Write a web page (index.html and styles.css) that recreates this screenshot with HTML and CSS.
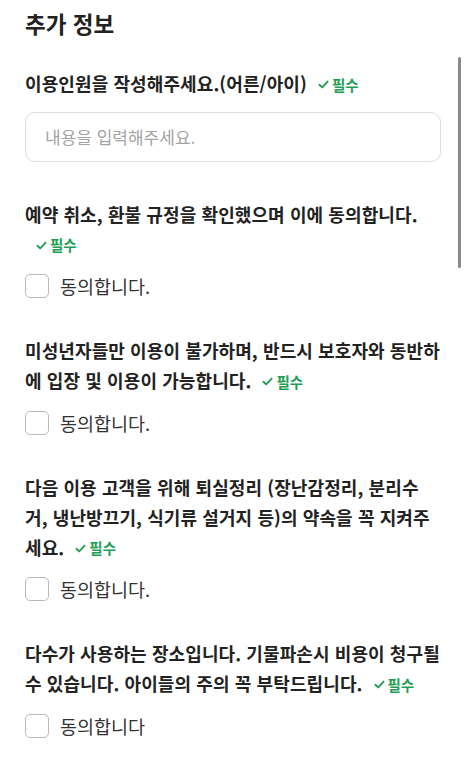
FILE: index.html
```html
<!DOCTYPE html>
<html lang="ko">
<head>
<meta charset="utf-8">
<link rel="stylesheet" href="styles.css">
</head>
<body>
<div class="page">
  <h1 class="title">추가 정보</h1>

  <section class="field first">
    <p class="q">이용인원을 작성해주세요.(어른/아이)<span class="req"><svg viewBox="0 0 12 12" class="chk"><path d="M1.5 6.3 L4.6 9.2 L10.5 2.8" fill="none" stroke="currentColor" stroke-width="2" stroke-linecap="round" stroke-linejoin="round"/></svg>필수</span></p>
    <div class="input">내용을 입력해주세요.</div>
  </section>

  <section class="field">
    <p class="q">예약 취소, 환불 규정을 확인했으며 이에 동의합니다.<span class="req"><svg viewBox="0 0 12 12" class="chk"><path d="M1.5 6.3 L4.6 9.2 L10.5 2.8" fill="none" stroke="currentColor" stroke-width="2" stroke-linecap="round" stroke-linejoin="round"/></svg>필수</span></p>
    <label class="agree"><span class="box"></span>동의합니다.</label>
  </section>

  <section class="field">
    <p class="q">미성년자들만 이용이 불가하며, 반드시 보호자와 동반하에 입장 및 이용이 가능합니다.<span class="req"><svg viewBox="0 0 12 12" class="chk"><path d="M1.5 6.3 L4.6 9.2 L10.5 2.8" fill="none" stroke="currentColor" stroke-width="2" stroke-linecap="round" stroke-linejoin="round"/></svg>필수</span></p>
    <label class="agree"><span class="box"></span>동의합니다.</label>
  </section>

  <section class="field">
    <p class="q">다음 이용 고객을 위해 퇴실정리 (장난감정리, 분리수거, 냉난방끄기, 식기류 설거지 등)의 약속을 꼭 지켜주세요.<span class="req"><svg viewBox="0 0 12 12" class="chk"><path d="M1.5 6.3 L4.6 9.2 L10.5 2.8" fill="none" stroke="currentColor" stroke-width="2" stroke-linecap="round" stroke-linejoin="round"/></svg>필수</span></p>
    <label class="agree"><span class="box"></span>동의합니다.</label>
  </section>

  <section class="field">
    <p class="q">다수가 사용하는 장소입니다. 기물파손시 비용이 청구될 수 있습니다. 아이들의 주의 꼭 부탁드립니다.<span class="req"><svg viewBox="0 0 12 12" class="chk"><path d="M1.5 6.3 L4.6 9.2 L10.5 2.8" fill="none" stroke="currentColor" stroke-width="2" stroke-linecap="round" stroke-linejoin="round"/></svg>필수</span></p>
    <label class="agree"><span class="box"></span>동의합니다</label>
  </section>
</div>
<div class="scrollbar"></div>
</body>
</html>
```
FILE: styles.css
```css
html, body {
  margin: 0;
  padding: 0;
  background: #fff;
}
body {
  font-family: "Noto Sans CJK KR", "Noto Sans", sans-serif;
  color: #222;
  overflow: hidden;
}
.page {
  padding: 8px 25px 0 25px;
  width: 416px;
}
.title {
  margin: 0;
  font-size: 22.5px;
  font-weight: 700;
  line-height: 30px;
  color: #222;
}
.field {
  margin-top: 37px;
}
.field.first {
  margin-top: 30px;
}
.q {
  margin: 0;
  font-size: 18px;
  font-weight: 700;
  line-height: 30px;
  color: #222;
  letter-spacing: 0.1px;
}
.req {
  display: inline-flex;
  align-items: center;
  margin-left: 11px;
  color: #1e9e55;
  font-size: 14.5px;
  font-weight: 700;
  vertical-align: 1px;
  letter-spacing: 0;
}
.chk {
  width: 11px;
  height: 11px;
  margin-right: 3px;
}
.input {
  margin-top: 12px;
  border: 1px solid #dedede;
  border-radius: 10px;
  box-sizing: border-box;
  height: 50px;
  padding: 0 19px;
  display: flex;
  align-items: center;
  font-size: 17px;
  color: #a3a3a3;
}
.agree {
  margin-top: 14px;
  display: flex;
  align-items: center;
  font-size: 18.5px;
  color: #333;
  height: 24px;
}
.box {
  width: 24px;
  height: 24px;
  box-sizing: border-box;
  border: 1px solid #b9b9b9;
  border-radius: 5px;
  margin-right: 11px;
}
.scrollbar {
  position: absolute;
  left: 458px;
  top: 57px;
  width: 3px;
  height: 211px;
  background: #8a8a8a;
  border-radius: 2px;
}
```
